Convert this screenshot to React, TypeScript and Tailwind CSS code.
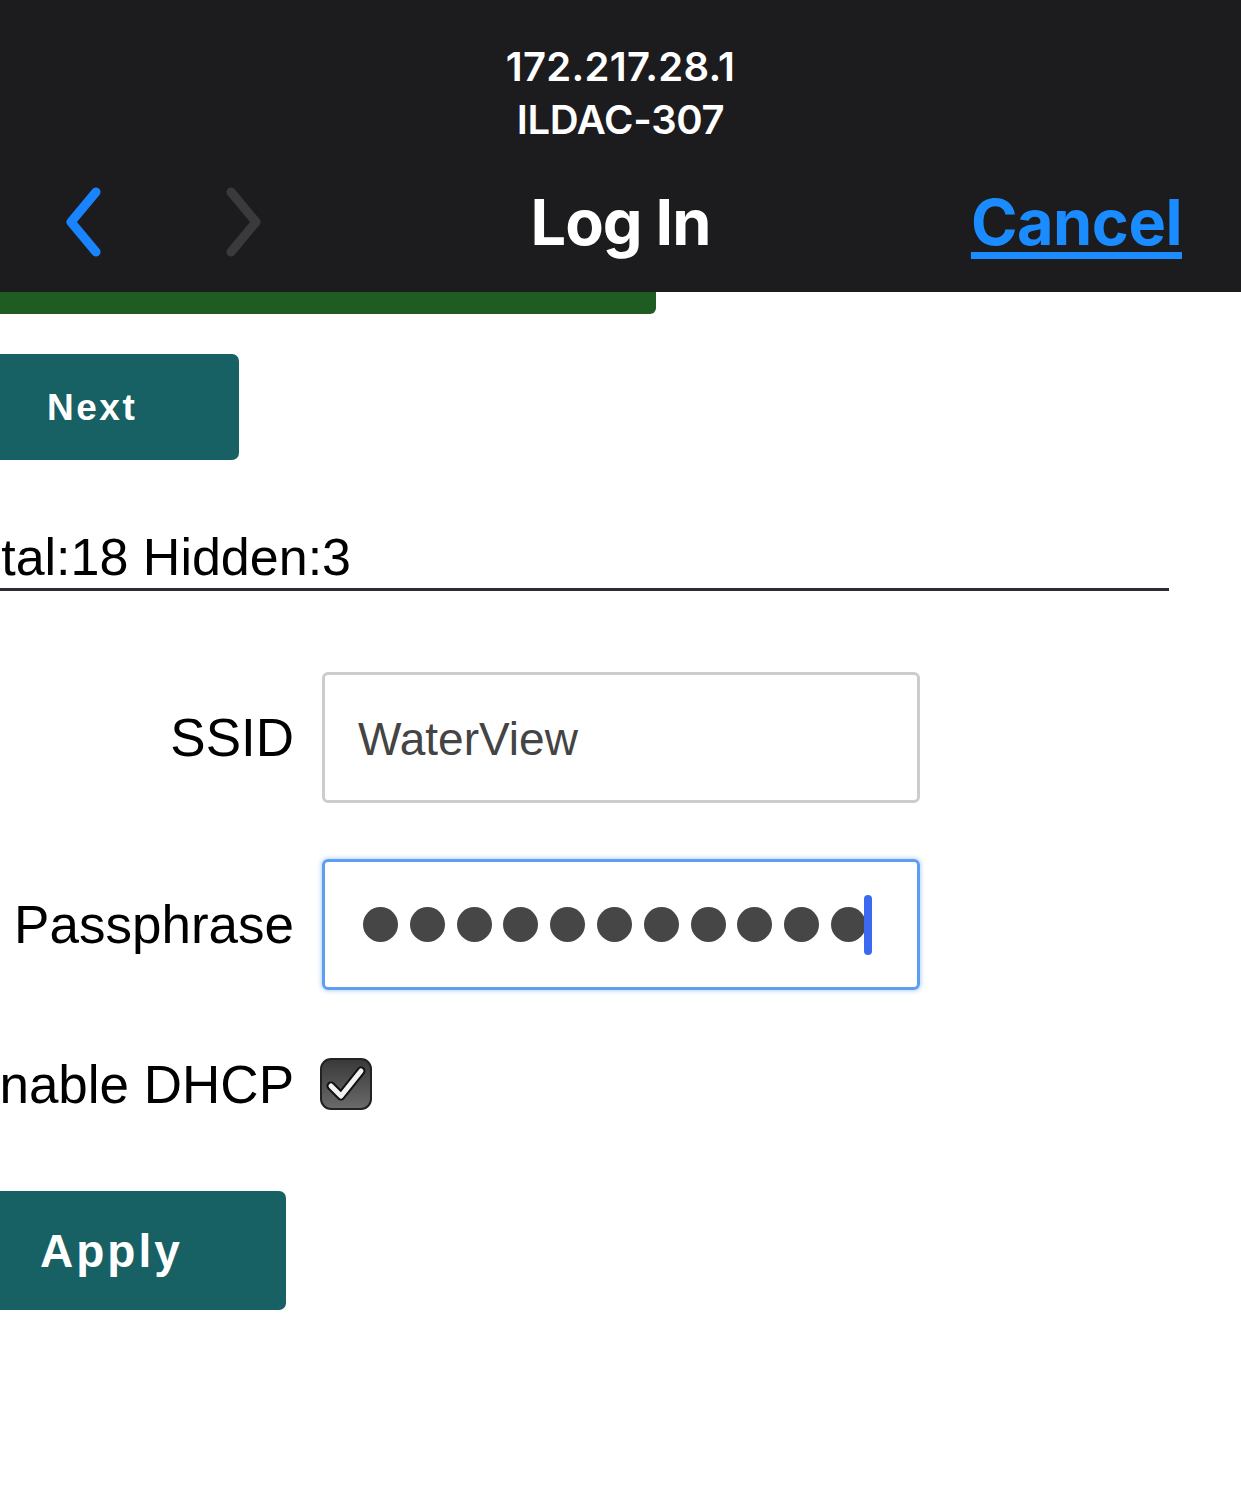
import React from "react";

function BackChevron() {
  return (
    <svg width="60" height="80" viewBox="0 0 60 80" className="block">
      <path d="M41 10 L16 40 L41 70" fill="none" stroke="#1a84ff" strokeWidth="9" strokeLinecap="round" strokeLinejoin="round" />
    </svg>
  );
}

function ForwardChevron() {
  return (
    <svg width="60" height="80" viewBox="0 0 60 80" className="block">
      <path d="M19 10 L44 40 L19 70" fill="none" stroke="#3a3a3c" strokeWidth="9" strokeLinecap="round" strokeLinejoin="round" />
    </svg>
  );
}

function CheckBox() {
  return (
    <div className="w-[52px] h-[52px] rounded-[11px] border-[2px] border-[#222] bg-gradient-to-b from-[#3a3a3a] to-[#6a6a6a] flex items-center justify-center">
      <svg width="40" height="40" viewBox="0 0 40 40">
        <path d="M5 22 L15 32 L35 7" fill="none" stroke="#111" strokeWidth="9" strokeLinejoin="round" strokeLinecap="round" />
        <path d="M5 22 L15 32 L35 7" fill="none" stroke="#f2f2f2" strokeWidth="5" strokeLinejoin="round" strokeLinecap="round" />
      </svg>
    </div>
  );
}

const dots = Array.from({ length: 11 });

export default function App() {
  return (
    <div className="w-[1241px] h-[1485px] bg-white overflow-hidden relative" style={{ fontFamily: '"Liberation Sans", Arial, sans-serif' }}>
      {/* Header */}
      <div className="h-[292px] bg-[#1c1c1e] flex flex-col" style={{ fontFamily: 'Inter, "Liberation Sans", sans-serif' }}>
        <div className="pt-[40px] flex flex-col items-center text-white font-semibold text-[40px] leading-[53px]">
          <div className="tracking-[0.3px]">172.217.28.1</div>
          <div className="tracking-[-0.3px]">ILDAC-307</div>
        </div>
        <div className="mt-[36px] h-[80px] relative flex items-center">
          <div className="absolute left-[55px] top-[0px]"><BackChevron /></div>
          <div className="absolute left-[212px] top-[0px]"><ForwardChevron /></div>
          <div className="w-full text-center text-white font-bold text-[63px] leading-none tracking-[-1px]">Log In</div>
          <div className="absolute right-[59px] top-[9px] text-[#1a8cff] font-bold text-[63px] leading-none tracking-[-0.5px] underline decoration-[7px] underline-offset-[7px]">Cancel</div>
        </div>
      </div>

      {/* Green progress bar */}
      <div className="w-[656px] h-[22px] bg-[#1e5c22] rounded-br-[6px]" />

      {/* Next */}
      <div className="mt-[40px] w-[239px] h-[106px] bg-[#176064] rounded-r-[7px] flex items-center pl-[47px]">
        <span className="text-white font-bold text-[37px] tracking-[2.5px] leading-none">Next</span>
      </div>

      {/* Total line */}
      <div className="mt-[71px] w-[1169px] border-b-[3px] border-[#2a2e33] pb-[5px] relative h-[60px]">
        <div className="absolute right-[818px] top-[0px] whitespace-nowrap text-[52px] leading-[52px] text-black">Total:18 Hidden:3</div>
      </div>

      {/* Form */}
      <div className="mt-[81px] flex flex-col">
        <div className="flex items-center h-[131px]">
          <div className="w-[294px] flex justify-end whitespace-nowrap text-[53px] leading-none text-black">SSID</div>
          <div className="ml-[28px] w-[598px] h-[131px] border-[3px] border-[#cccccc] rounded-[6px] flex items-center pl-[33px] pt-[3px]">
            <span className="text-[46px] text-[#444] leading-none">WaterView</span>
          </div>
        </div>

        <div className="mt-[56px] flex items-center h-[131px]">
          <div className="w-[294px] flex justify-end whitespace-nowrap text-[53px] leading-none text-black">Passphrase</div>
          <div className="ml-[28px] w-[598px] h-[131px] border-[3px] border-[#5e9ef2] rounded-[6px] shadow-[0_0_4px_1px_rgba(94,158,242,0.45)] flex items-center pl-[38px]">
            <div className="flex items-center gap-[11.8px]">
              {dots.map((_, i) => (
                <div key={i} className="w-[35px] h-[35px] rounded-full bg-[#464646]" />
              ))}
            </div>
            <div className="ml-[-2px] w-[8px] h-[60px] rounded-full bg-[#3b6af0]" />
          </div>
        </div>

        <div className="mt-[68px] flex items-center h-[52px]">
          <div className="w-[294px] flex justify-end whitespace-nowrap text-[53px] leading-none text-black">Enable DHCP</div>
          <div className="ml-[26px]"><CheckBox /></div>
        </div>
      </div>

      {/* Apply */}
      <div className="mt-[81px] w-[286px] h-[119px] bg-[#176064] rounded-r-[7px] flex items-center pl-[40px]">
        <span className="text-white font-bold text-[46px] tracking-[3px] leading-none">Apply</span>
      </div>
    </div>
  );
}
